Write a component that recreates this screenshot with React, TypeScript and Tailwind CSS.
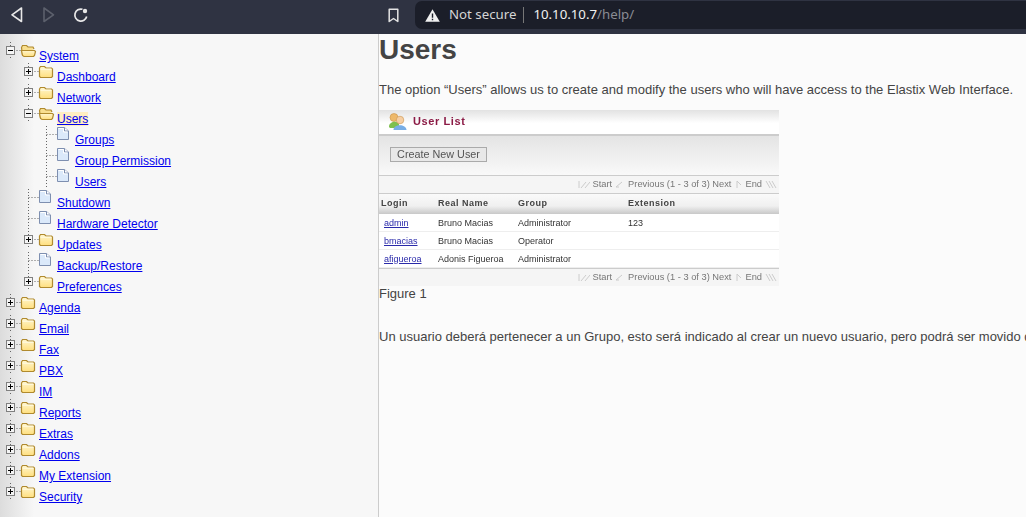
const FONT = "font-['Liberation_Sans',Arial,sans-serif]";

interface TreeItem {
    label: string;
    level: number;
    type: "open" | "closed" | "page";
    selected?: boolean;
}

const items: TreeItem[] = [
    { label: "System", level: 0, type: "open" },
    { label: "Dashboard", level: 1, type: "closed" },
    { label: "Network", level: 1, type: "closed" },
    { label: "Users", level: 1, type: "open", selected: true },
    { label: "Groups", level: 2, type: "page" },
    { label: "Group Permission", level: 2, type: "page" },
    { label: "Users", level: 2, type: "page" },
    { label: "Shutdown", level: 1, type: "page" },
    { label: "Hardware Detector", level: 1, type: "page" },
    { label: "Updates", level: 1, type: "closed" },
    { label: "Backup/Restore", level: 1, type: "page" },
    { label: "Preferences", level: 1, type: "closed" },
    { label: "Agenda", level: 0, type: "closed" },
    { label: "Email", level: 0, type: "closed" },
    { label: "Fax", level: 0, type: "closed" },
    { label: "PBX", level: 0, type: "closed" },
    { label: "IM", level: 0, type: "closed" },
    { label: "Reports", level: 0, type: "closed" },
    { label: "Extras", level: 0, type: "closed" },
    { label: "Addons", level: 0, type: "closed" },
    { label: "My Extension", level: 0, type: "closed" },
    { label: "Security", level: 0, type: "closed" },
];

const users = [
    { login: "admin", name: "Bruno Macias", group: "Administrator", ext: "123" },
    { login: "bmacias", name: "Bruno Macias", group: "Operator", ext: "" },
    { login: "afigueroa", name: "Adonis Figueroa", group: "Administrator", ext: "" },
];

function FolderClosed({ x }: { x: number }) {
    return (
        <g transform={`translate(${x} 5)`}>
            <path d="M0.5 2 L1.5 0.5 H5.5 L7 2 H12.5 L13.5 3 V10.5 L12.5 11.5 H1.5 L0.5 10.5 Z" fill="url(#folderFill)" stroke="#b08a2e" strokeWidth={1.2} />
            <path d="M1.5 3.2 H12.5" stroke="#fffbe6" />
        </g>
    );
}

function FolderOpen({ x }: { x: number }) {
    return (
        <g transform={`translate(${x} 5)`}>
            <path d="M1.5 10 L0.5 2.5 L1.5 0.5 H5.5 L7 2 H12 L13 4" fill="#f8df90" stroke="#b08a2e" strokeWidth={1.2} />
            <path d="M0.5 5.5 H13.5 L14.5 6.5 L13.5 10.5 L12.5 11.5 H3 L1.5 10.5 Z" fill="url(#folderFill)" stroke="#b08a2e" strokeWidth={1.2} />
        </g>
    );
}

function Page({ x }: { x: number }) {
    return (
        <g transform={`translate(${x} 3)`}>
            <path d="M0.5 0.5 H7.5 L11.5 4 V12.5 H0.5 Z" fill="#dbe9fa" stroke="#7e8fb0" />
            <path d="M7.5 0.5 V4 H11.5" fill="#fff" stroke="#7e8fb0" />
            <path d="M1.5 1.5 H6.5 V5 H10.5" fill="none" stroke="#fff" />
        </g>
    );
}

function TreeRow({ item }: { item: TreeItem }) {
    // x of the dotted stem, then the folder or page sits right after it
    const stem = item.level * 18 + 10.5;
    const width = item.level * 18 + (item.type === "page" ? 33 : 39);
    const textGap = item.type === "page" ? "ml-[6px]" : "ml-0";
    return (
        <div className="flex h-[21px] items-start">
            <svg width={width} height={21} className="shrink-0">
                <defs>
                    <linearGradient id="folderFill" x1="0" y1="0" x2="0" y2="1">
                        <stop offset="0" stopColor="#fff6cf" />
                        <stop offset="1" stopColor="#ffdf7e" />
                    </linearGradient>
                </defs>
                <path d={`M${stem} 2 V${item.type === "page" ? 21 : 19}`} stroke="#666" strokeDasharray="1 2" fill="none" />
                <path d={`M${stem} 10.5 H${stem + 11}`} stroke="#666" strokeDasharray="1 2" fill="none" />
                {item.type !== "page" && (
                    <g>
                        <rect x={stem - 4} y={6.5} width={8} height={8} fill="#f4f4f4" stroke="#808080" />
                        <path d={`M${stem - 2.5} 10.5 H${stem + 2.5}`} stroke="#000" fill="none" />
                        {item.type === "closed" && <path d={`M${stem} 8 V13`} stroke="#000" fill="none" />}
                    </g>
                )}
                {item.type === "closed" && <FolderClosed x={stem + 10.5} />}
                {item.type === "open" && <FolderOpen x={stem + 10.5} />}
                {item.type === "page" && <Page x={stem + 10.5} />}
            </svg>
            <a className={`${textGap} mt-[9px] text-[12px] leading-[14px] text-[#0000ee] underline whitespace-nowrap ${item.selected ? "bg-[#ffeec2]" : ""}`}>
                {item.label}
            </a>
        </div>
    );
}

function PagerBar() {
    return (
        <div className="flex h-[17px] items-center justify-end bg-[#f5f5f5] pb-[1px] pr-[2px] text-[9.3px] text-[#777]">
            <svg width={12} height={9}><path d="M1 1 V8 M3 8 L8 2 M7 8 L12 2" stroke="#ccc" fill="none" /></svg>
            <span className="ml-[2px]">Start</span>
            <svg width={8} height={9} className="ml-[3px]"><path d="M1 7 L7 2 M1 7 H4" stroke="#ccc" fill="none" /></svg>
            <span className="ml-[5px]">Previous (1 - 3 of 3) Next</span>
            <svg width={6} height={9} className="ml-[5px]"><path d="M1 1 V8 M1 1 L5 5" stroke="#ccc" fill="none" /></svg>
            <span className="ml-[3px]">End</span>
            <svg width={12} height={9} className="ml-[3px]"><path d="M1 1 L5 8 M4 1 L8 8 M7 1 L11 8" stroke="#ccc" fill="none" /></svg>
        </div>
    );
}

function UserListShot() {
    return (
        <div className="w-[400px] bg-[#fbfbfb] blur-[0.4px]">
            <div className="flex h-[26px] items-center gap-[6px] border-b-2 border-[#ccc] bg-[linear-gradient(#e2e2e2,#ffffff_55%)] pb-[2px] pl-[9px]">
                <svg width={19} height={19} viewBox="0 0 19 19">
                    <circle cx={6} cy={5.5} r={4} fill="#eeb96a" stroke="#c9924a" strokeWidth={0.6} />
                    <path d="M1 15 C0.5 10 9 8 11 12 V16 H2 Z" fill="#7fc04f" />
                    <circle cx={12} cy={8} r={3.8} fill="#f6cfa4" stroke="#c9924a" strokeWidth={0.6} />
                    <path d="M5.5 18 C5 11.5 18.5 11.5 18.5 18 Z" fill="#78aee6" />
                </svg>
                <span className="text-[11px] font-bold tracking-[0.6px] text-[#8b1a45]">User List</span>
            </div>
            <div className="h-[39px] bg-[linear-gradient(#e4e4e4,#f9f9f9)] pl-[11px] pt-[11px]">
                <div className="flex h-[15px] w-[97px] items-center justify-center border border-[#aaa] bg-[#e8e8e8] text-[10.8px] text-[#555]">
                    Create New User
                </div>
            </div>
            <div className="border-y border-[#ccc]">
                <PagerBar />
            </div>
            <div className="grid h-[20px] grid-cols-[57px_80px_110px_1fr] items-center bg-[linear-gradient(#fafafa,#f0f0f0_60%,#c8c8c8)] pb-[2px] pl-[2px] text-[9px] font-bold tracking-[0.5px] text-[#444]">
                <span>Login</span>
                <span>Real Name</span>
                <span>Group</span>
                <span>Extension</span>
            </div>
            {users.map((u) => (
                <div key={u.login} className="grid h-[18px] grid-cols-[57px_80px_110px_1fr] items-center border-b border-[#eee] bg-white pl-[2px] pt-[1px] text-[9px] text-[#333]">
                    <a className="ml-[3px] text-[#2a2aaa] underline">{u.login}</a>
                    <span>{u.name}</span>
                    <span>{u.group}</span>
                    <span>{u.ext}</span>
                </div>
            ))}
            <div className="border-t border-[#ccc]">
                <PagerBar />
            </div>
        </div>
    );
}

export default function App() {
    return (
        <div className={`${FONT} flex h-[517px] w-[1026px] flex-col overflow-hidden bg-[#fbfbfb]`}>
            {/* browser toolbar */}
            <div className="flex h-[34px] shrink-0 items-center bg-[#2f3342] pb-[4px]">
                <svg width={16} height={18} viewBox="0 0 16 18" className="ml-[9px]">
                    <path d="M12.5 2 V15.5 L3 8.8 Z" fill="none" stroke="#e8e8e8" strokeWidth={1.6} strokeLinejoin="round" />
                </svg>
                <svg width={16} height={18} viewBox="0 0 16 18" className="ml-[16px]">
                    <path d="M3 2 V15.5 L12.5 8.8 Z" fill="none" stroke="#5c606c" strokeWidth={1.6} strokeLinejoin="round" />
                </svg>
                <svg width={16} height={16} viewBox="0 0 16 16" className="ml-[16px]">
                    <path d="M13.7 9.5 A6 6 0 1 1 9.5 2.3" fill="none" stroke="#e8e8e8" strokeWidth={1.7} />
                    <circle cx={12} cy={4} r={2.2} fill="#e8e8e8" />
                </svg>
                <svg width={11} height={15} viewBox="0 0 11 15" className="ml-[299px]">
                    <path d="M1.2 1.2 H9.8 V13.5 L5.5 10.5 L1.2 13.5 Z" fill="none" stroke="#e4e4e4" strokeWidth={1.5} strokeLinejoin="round" />
                </svg>
                <div className="ml-[16px] flex h-[28px] flex-1 items-center rounded-l-[7px] bg-[#1b1e29] pl-[10px] font-['Noto_Sans',sans-serif]">
                    <svg width={15} height={13} viewBox="0 0 15 13">
                        <path d="M7.5 0.3 L14.8 12.7 H0.2 Z" fill="#f0f0f0" />
                        <path d="M6.8 4.5 H8.2 V8.8 H6.8 Z M6.8 9.7 H8.2 V11.2 H6.8 Z" fill="#1b1e29" />
                    </svg>
                    <span className="ml-[9px] text-[13.25px] text-[#d5d5d5]">Not secure</span>
                    <span className="ml-[7px] h-[16px] w-px bg-[#777]" />
                    <span className="ml-[9px] text-[13.25px] text-[#f0f0f0]">10.10.10.7</span>
                    <span className="text-[13.25px] text-[#8a8c94]">/help/</span>
                </div>
            </div>

            <div className="flex min-h-0 flex-1">
                {/* tree frame */}
                <div className="w-[379px] shrink-0 border-r border-[#ccc] bg-[linear-gradient(90deg,#dcdcdc,#f7f7f7_34px)] pt-[6px]">
                    {items.map((item, i) => (
                        <TreeRow key={i} item={item} />
                    ))}
                </div>

                {/* help frame */}
                <div className="min-w-0 flex-1 overflow-hidden text-[13px] leading-[15px] text-[#444]">
                    <h1 className="text-[28px] font-bold leading-[32px]">Users</h1>
                    <p className="mt-[16px] whitespace-nowrap">The option “Users” allows us to create and modify the users who will have access to the Elastix Web Interface.</p>
                    <div className="mt-[13px]">
                        <UserListShot />
                    </div>
                    <p>Figure 1</p>
                    <p className="mt-[28px] whitespace-nowrap">Un usuario deberá pertenecer a un Grupo, esto será indicado al crear un nuevo usuario, pero podrá ser movido de grupo.</p>
                </div>
            </div>
        </div>
    );
}
